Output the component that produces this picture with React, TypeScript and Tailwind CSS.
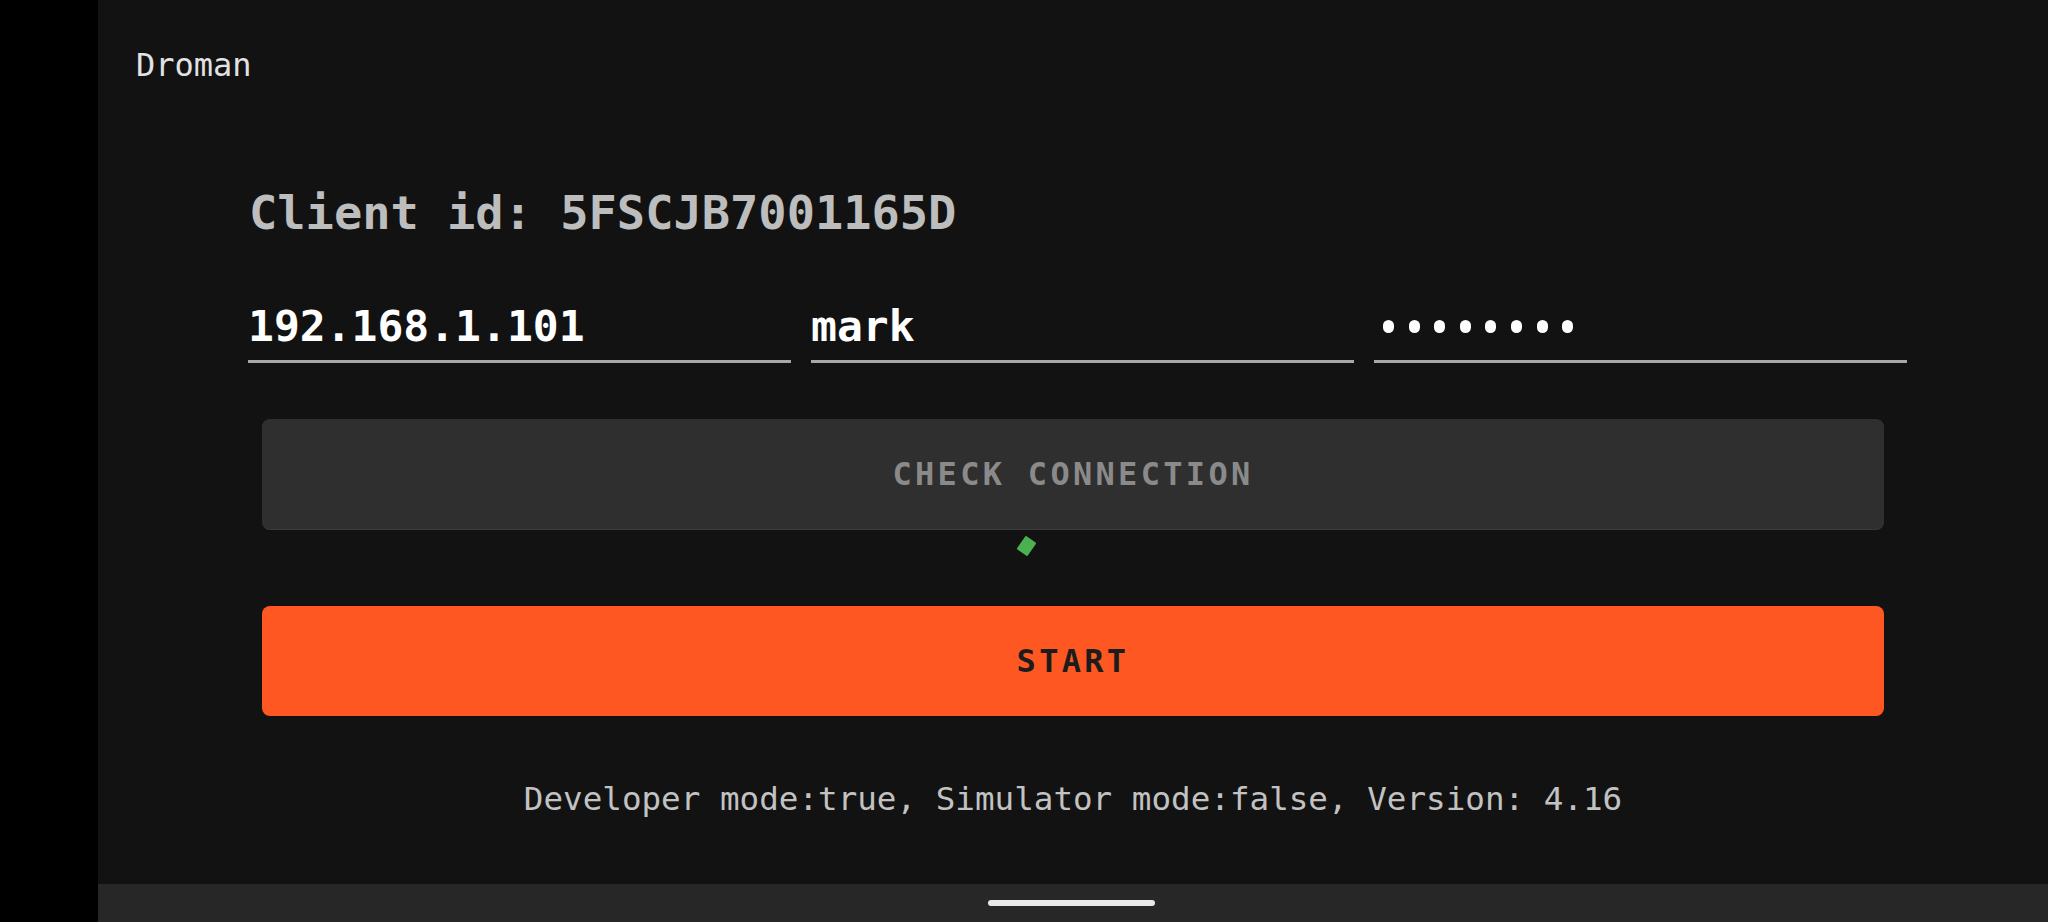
const mono = "font-['DejaVu_Sans_Mono','Liberation_Mono',monospace]"

function Field({
  value,
  width,
  secret = false,
}: {
  value: string
  width: string
  secret?: boolean
}) {
  return (
    <div className={`flex flex-col ${width}`}>
      <div className="flex h-[52px] items-center">
        {secret ? (
          <div className="ml-[9px] flex gap-[14.6px]">
            {Array.from({ length: value.length }).map((_, i) => (
              <span key={i} className="h-[13px] w-[11px] rounded-full bg-white" />
            ))}
          </div>
        ) : (
          <span className="text-[43px] leading-[52px] font-bold text-white">{value}</span>
        )}
      </div>
      <div className="mt-[8px] h-[3px] bg-[#a8a8a8]" />
    </div>
  )
}

export default function App() {
  return (
    <div className={`flex h-[922px] w-[2048px] ${mono}`}>
      <div className="w-[98px] shrink-0 bg-black" />
      <div className="flex flex-1 flex-col bg-[#121212]">
        <div className="mt-[45px] pl-[38px] text-[32px] leading-[40px] text-[#e2e2e2]">
          Droman
        </div>

        <div className="mt-[100px] pl-[151px] text-[47px] leading-[56px] font-bold text-[#bdbdbd]">
          Client id: 5FSCJB7001165D
        </div>

        <div className="mt-[59px] ml-[150px] flex gap-[20px]">
          <Field value="192.168.1.101" width="w-[543px]" />
          <Field value="mark" width="w-[543px]" />
          <Field value="password" width="w-[533px]" secret />
        </div>

        <div className="mx-[164px] mt-[56px] flex h-[110px] items-center justify-center rounded-[8px] bg-[#2f2f2f] shadow-[0_1px_0_#3a3a3a]">
          <span className="text-[32px] font-bold tracking-[3.3px] text-[#8a8a8a]">
            CHECK CONNECTION
          </span>
        </div>

        <div className="flex h-[34px] items-center justify-center">
          <div className="mr-[94px] h-[16px] w-[13px] rotate-[35deg] rounded-[1px] bg-[#4caf50]" />
        </div>

        <div className="mx-[164px] mt-[43px] flex h-[110px] items-center justify-center rounded-[8px] bg-[#ff5722]">
          <span className="text-[32px] font-bold tracking-[3.3px] text-[#1c1c1c]">START</span>
        </div>

        <div className="mt-[63px] text-center text-[32.6px] leading-[40px] text-[#c2c2c2]">
          Developer mode:true, Simulator mode:false, Version: 4.16
        </div>

        <div className="flex-1" />

        <div className="flex h-[38px] items-center justify-center bg-[#272727]">
          <div className="ml-[-4px] h-[6px] w-[167px] rounded-full bg-[#e8e8e8]" />
        </div>
      </div>
    </div>
  )
}
